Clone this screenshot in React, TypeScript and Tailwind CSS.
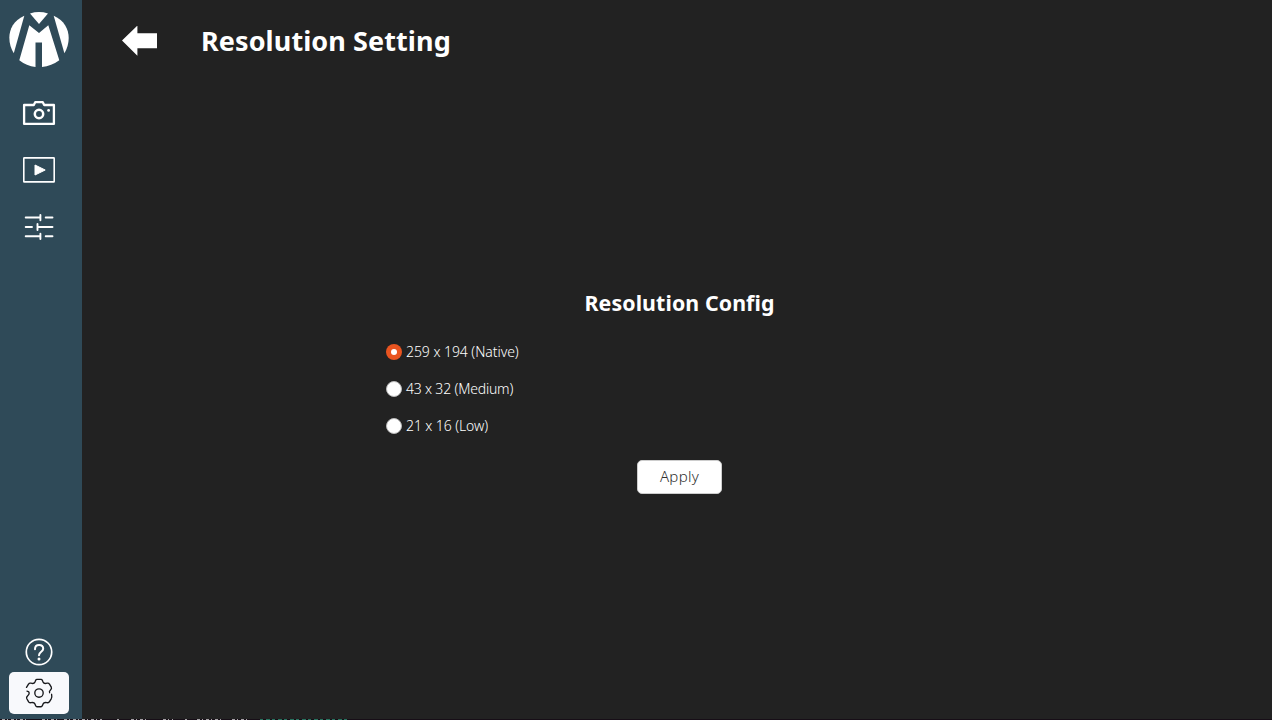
import { useState } from "react";

const options = ["259 x 194 (Native)", "43 x 32 (Medium)", "21 x 16 (Low)"];
const spacing = ["tracking-[-0.06px]", "tracking-[-0.19px]", "tracking-[-0.1px]"];

function Logo() {
  return (
    <svg width="60" height="56" viewBox="9 12 60 56" fill="#fff">
      <path d="M30 13.4Q39 10.8 48 13.4L39 24Z" />
      <path d="M24.3 15.8L13.8 53.3C6.5 41.5 7 23.5 24.3 15.8Z" />
      <path d="M53.7 15.8L64.4 53.3C71.5 41.5 71 23.5 53.7 15.8Z" />
      <path d="M29.3 25.3L39 33L48.3 25.3L59.3 60.2Q51.5 66 42 66.9V42.5H35.5V66.9Q26.5 66 19.3 60.2Z" />
    </svg>
  );
}

function CameraIcon() {
  return (
    <svg width="34" height="28" viewBox="22 99 34 28" fill="none" stroke="#fff" strokeWidth="2.3" strokeLinejoin="round">
      <path d="M24.1 105H33.8L35.2 102.2H42.8L44.2 105H53.9V123.9H24.1Z" />
      <circle cx="39" cy="114" r="4.2" strokeWidth="2.5" />
      <circle cx="48.6" cy="110.4" r="1.4" fill="#fff" stroke="none" />
    </svg>
  );
}

function PlayIcon() {
  return (
    <svg width="34" height="28" viewBox="22 156 34 28" fill="none" stroke="#fff" strokeWidth="1.6">
      <rect x="23.8" y="157.9" width="30.4" height="24" rx="0.5" />
      <path d="M35 165L45.2 170L35 175Z" fill="#fff" strokeWidth="1" strokeLinejoin="round" />
    </svg>
  );
}

function SlidersIcon() {
  return (
    <svg width="34" height="28" viewBox="22 213 34 28" fill="none" stroke="#fff" strokeWidth="1.9" strokeLinecap="round">
      <path d="M25.7 217.5H40M45.7 217.5H52.5M25.7 227H32M38 227H52.5M25.7 236.3H40M45.7 236.3H52.5" />
      <path d="M40.4 214.9V220.2M37.5 224V230.1M40.4 233.7V239" />
    </svg>
  );
}

function HelpIcon() {
  return (
    <svg width="28" height="28" viewBox="25 638 28 28" fill="none" stroke="#fff" strokeWidth="1.7" strokeLinecap="round">
      <circle cx="39" cy="652" r="12.7" />
      <path d="M35 649.2C35 646.4 36.7 644.9 39.1 644.9C41.6 644.9 43.2 646.5 43.2 648.7C43.2 651.7 39 651.8 39 655.2" strokeWidth="2" />
      <circle cx="39" cy="658.9" r="1.5" fill="#fff" stroke="none" />
    </svg>
  );
}

function GearIcon() {
  return (
    <svg width="28" height="30" viewBox="25 678 28 30" fill="none" stroke="#18191c" strokeWidth="1.35" strokeLinecap="round" strokeLinejoin="round">
      <circle cx="39" cy="693" r="4.2" />
      <path d="M26.5 687.4L28.5 684.2Q29.2 682.8 31 683.2Q34 684.1 34.9 682.1L35.6 680.4Q36 679.4 37 679.4H41Q42 679.4 42.4 680.4L43.1 682.1Q44 684.1 47 683.2Q48.8 682.8 49.5 684.2L51.3 687.2Q52 688.6 50.5 689.9Q48.9 691.4 49.6 692.7" />
      <path d="M51.6 694.3Q52.2 696.8 51.2 698.8L49.5 701.7Q48.7 703.1 47 702.7Q44 701.9 43.1 703.9L42.3 705.8Q41.9 706.7 41 706.7H37Q36.1 706.7 35.7 705.8L34.9 703.9Q34 701.9 31 702.7Q29.2 703.1 28.5 701.7L26.7 698.5Q26.2 697.4 27.5 696.1Q29.2 694.6 29.2 693Q29.2 691.5 27 691.2" />
    </svg>
  );
}

export default function App() {
  const [selected, setSelected] = useState(0);
  return (
    <div className="flex h-[720px] w-[1272px] flex-col overflow-hidden bg-[#222222] font-['Noto_Sans',sans-serif] text-white">
      <div className="flex h-[719px]">
        <nav className="flex w-[82px] shrink-0 flex-col items-center bg-[#2f4a58] pt-3 pr-1 pb-[5px]">
          <Logo />
          <button className="mt-[31px]" aria-label="Camera"><CameraIcon /></button>
          <button className="mt-[29px]" aria-label="Playback"><PlayIcon /></button>
          <button className="mt-[29px]" aria-label="Controls"><SlidersIcon /></button>
          <button className="mt-auto" aria-label="Help"><HelpIcon /></button>
          <button className="mt-1.5 flex h-[42px] w-[60px] items-center justify-center rounded-[5px] bg-[#f8f9fc]" aria-label="Settings">
            <GearIcon />
          </button>
        </nav>
        <main className="flex flex-1 flex-col">
          <header className="flex h-[82px] items-center pl-10">
            <button aria-label="Back">
              <svg width="35" height="30" viewBox="0 0 35 30" fill="#fff">
                <path d="M0 14.6L15.4 -0.4V7.3H35V22.3H15.4V29.7Z" />
              </svg>
            </button>
            <h1 className="ml-[44px] text-[27px] leading-9 font-bold tracking-[0.09px] whitespace-nowrap">Resolution Setting</h1>
          </header>
          <section className="ml-[304px] flex w-[587px] flex-col pt-[206px]">
            <h2 className="text-center text-[21.33px] leading-[30px] font-bold tracking-[0.1px] whitespace-nowrap">Resolution Config</h2>
            <div className="mt-[26px] flex flex-col gap-[21px]">
              {options.map((option, i) => (
                <label key={option} className="flex h-4 items-center gap-1">
                  <input type="radio" name="resolution" className="sr-only" checked={selected === i} onChange={() => setSelected(i)} />
                  {selected === i ? (
                    <span className="flex size-4 items-center justify-center rounded-full bg-[#e95420]">
                      <span className="size-1.5 rounded-full bg-white" />
                    </span>
                  ) : (
                    <span className="size-4 rounded-full border border-[#b9b9b9] bg-white" />
                  )}
                  <span className={`text-[14px] leading-4 font-light whitespace-nowrap ${spacing[i]}`}>{option}</span>
                </label>
              ))}
            </div>
            <button className="mt-[26px] flex h-[34px] w-[85px] items-center justify-center self-center rounded-[5px] border border-[#cdcdcd] bg-white pb-0.5 text-[15px] font-light tracking-[0.3px] text-[#303030]">
              Apply
            </button>
          </section>
        </main>
      </div>
      <svg className="block h-px w-full bg-[#170e17]" viewBox="0 0 1272 1" preserveAspectRatio="none" fill="none">
        <path d="M2 .5H27M42 .5H59M64 .5H102M117 .5H119M131 .5H149M163 .5H173M185 .5H187M197 .5H222M232 .5H247" stroke="#a5a1a5" strokeDasharray="3 2 1 3" />
        <path d="M260 .5H350" stroke="#27735f" strokeDasharray="3 3 4 2" />
      </svg>
    </div>
  );
}
